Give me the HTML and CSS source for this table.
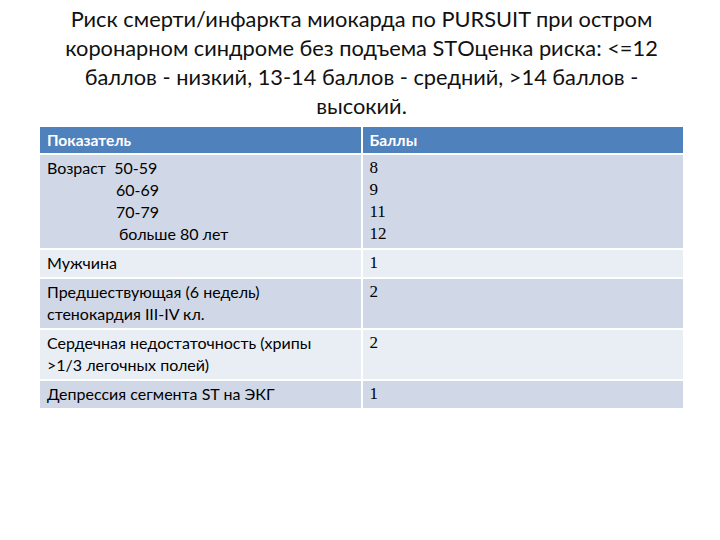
FILE: index.html
```html
<!DOCTYPE html>
<html lang="ru">
<head>
<meta charset="utf-8">
<link rel="stylesheet" href="styles.css">
</head>
<body>
<div class="slide">
  <h1 class="title">Риск смерти/инфаркта миокарда по PURSUIT при остром коронарном синдроме без подъема STОценка риска: &lt;=12 баллов - низкий, 13-14 баллов - средний, &gt;14 баллов - высокий.</h1>
  <table class="score">
    <thead>
      <tr><th>Показатель</th><th>Баллы</th></tr>
    </thead>
    <tbody>
      <tr class="odd">
        <td><div>Возраст&nbsp; 50-59</div><div class="ind">60-69</div><div class="ind">70-79</div><div class="ind2">больше 80 лет</div></td>
        <td class="num"><div>8</div><div>9</div><div>11</div><div>12</div></td>
      </tr>
      <tr class="even"><td>Мужчина</td><td class="num">1</td></tr>
      <tr class="odd"><td>Предшествующая (6 недель)<br>стенокардия III-IV кл.</td><td class="num">2</td></tr>
      <tr class="even"><td>Сердечная недостаточность (хрипы<br>&gt;1/3 легочных полей)</td><td class="num">2</td></tr>
      <tr class="odd"><td>Депрессия сегмента ST на ЭКГ</td><td class="num">1</td></tr>
    </tbody>
  </table>
</div>
</body>
</html>
```
FILE: styles.css
```css
html, body {
  margin: 0;
  padding: 0;
  background: #ffffff;
}
.slide {
  width: 720px;
  height: 540px;
  padding: 4px 35px 0 38px;
  box-sizing: border-box;
  font-family: Lato, "Open Sans", sans-serif;
  color: #000;
}
.title {
  margin: 0 0 5px 0;
  padding: 0 22px;
  font-weight: normal;
  font-size: 21.8px;
  line-height: 29px;
  text-align: center;
  color: #111;
}
.score {
  width: 647px;
  border-collapse: collapse;
  table-layout: fixed;
  font-size: 16px;
  line-height: 22px;
}
.score th, .score td {
  border: 2px solid #ffffff;
  text-align: left;
  vertical-align: top;
  padding: 2px 7px 3px 7px;
}
.score th {
  background: #4f81bd;
  color: #ffffff;
  font-weight: bold;
  font-size: 15.5px;
  padding: 2px 7px 2px 7px;
}
.score .odd td { background: #d0d8e8; }
.score .even td { background: #e9edf4; }
.num {
  font-family: "Liberation Serif", serif;
  font-size: 17px;
}
.ind { padding-left: 69px; }
.ind2 { padding-left: 72px; }
```
